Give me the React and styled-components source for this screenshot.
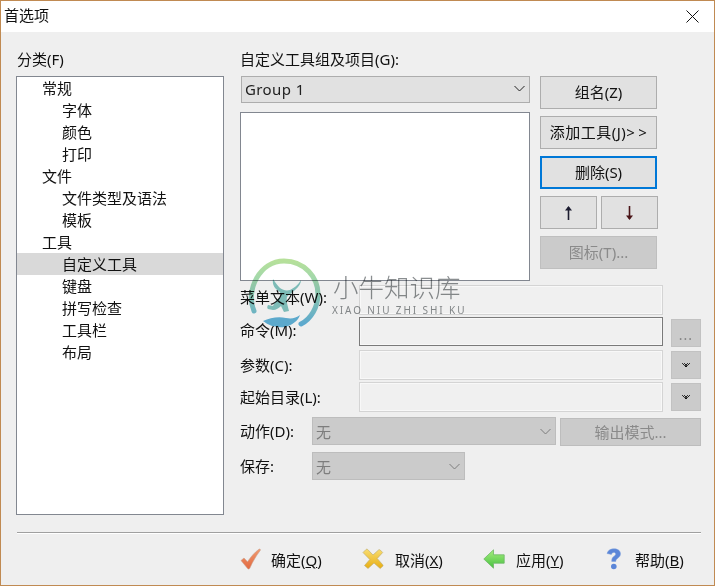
import React from 'react'
import styled, { createGlobalStyle } from 'styled-components'

const Global = createGlobalStyle`
  html, body { margin: 0; padding: 0; background: #fff; }
  body { font-family: "Noto Sans", "Noto Sans CJK SC", sans-serif; font-size: 15px; color: #111; }
`

const tree = [
  { text: '常规', level: 0 },
  { text: '字体', level: 1 },
  { text: '颜色', level: 1 },
  { text: '打印', level: 1 },
  { text: '文件', level: 0 },
  { text: '文件类型及语法', level: 1 },
  { text: '模板', level: 1 },
  { text: '工具', level: 0 },
  { text: '自定义工具', level: 1, selected: true },
  { text: '键盘', level: 1 },
  { text: '拼写检查', level: 1 },
  { text: '工具栏', level: 1 },
  { text: '布局', level: 1 },
]

function Chevron() {
  return (
    <svg width="11" height="7" viewBox="0 0 11 7">
      <path d="M.5 1 5.500 6l5-5" fill="none" stroke="currentColor" strokeWidth="1" />
    </svg>
  )
}

function Caret() {
  return (
    <svg width="8" height="5" viewBox="0 0 8 5" shapeRendering="crispEdges">
      <path d="M0 0h1v1H0zM2 0h1v1H2zM5 0h1v1H5zM7 0h1v1H7z" fill="#333" />
      <path d="M1 1h1v1H1zM3 1h2v1H3zM6 1h1v1H6z" fill="#222" />
      <path d="M2 2h4v1H2z" fill="#444" />
      <path d="M3 3h2v1H3z" fill="#111" />
    </svg>
  )
}

function ArrowGlyph({ down, color }) {
  return (
    <svg width="9" height="14" viewBox="0 0 9 14" style={{ transform: down ? 'rotate(180deg)' : 'none' }}>
      <path d="M4.500 1v13" stroke={color} strokeWidth="1.600" />
      <path d="M4.500 0 8 4.500H1z" fill={color} />
    </svg>
  )
}

function CheckIcon() {
  return (
    <svg width="22" height="22" viewBox="0 0 22 22">
      <defs>
        <linearGradient id="chk" x1="0" y1="0" x2="0" y2="1">
          <stop offset="0" stopColor="#f09a70" />
          <stop offset="1" stopColor="#e2683f" />
        </linearGradient>
      </defs>
      <path d="M1 12.500 4 10l3.500 3.800C10.500 9 14.500 4.500 19 1.200c1-.5 1.800.4 1.200 1.300C16 8 12.500 14 9.800 20.200c-.5 1-1.500 1.100-2.200.3z" fill="url(#chk)" stroke="#c9a08c" strokeWidth=".6" />
    </svg>
  )
}

function CrossIcon() {
  return (
    <svg width="22" height="22" viewBox="0 0 22 22">
      <defs>
        <linearGradient id="crs" x1="0" y1="0" x2="0" y2="1">
          <stop offset="0" stopColor="#f8dc70" />
          <stop offset="1" stopColor="#e8ae12" />
        </linearGradient>
      </defs>
      <path d="M1 4.500 4 1.500c.6-.5 1.300-.4 1.800.1L11 7l5.500-5c.5-.4 1.200-.4 1.700 0l2.500 2.500-5.500 6 5.500 6.200c.5.500.4 1.200 0 1.600l-2.500 2.200-6.200-5.500-6 5.500-3.500-3 5.300-6z" fill="url(#crs)" stroke="#b9a76a" strokeWidth=".6" />
    </svg>
  )
}

function BackIcon() {
  return (
    <svg width="22" height="20" viewBox="0 0 22 20">
      <defs>
        <linearGradient id="bck" x1="0" y1="0" x2="0" y2="1">
          <stop offset="0" stopColor="#a6ee7e" />
          <stop offset="1" stopColor="#46c040" />
        </linearGradient>
      </defs>
      <path d="M.8 10 10.500.8v5h10.700v8.400H10.500v5z" fill="url(#bck)" stroke="#6fb866" strokeWidth=".8" strokeLinejoin="round" />
    </svg>
  )
}

function HelpIcon() {
  return (
    <svg width="16" height="22" viewBox="0 0 16 22">
      <path d="M1 5.500C2 2 5 .8 8 .8c3.600 0 6.500 1.900 6.500 5 0 2.400-1.500 3.500-3 4.600-1.200.9-1.700 1.500-1.700 3H5.700c0-2.600.6-3.700 2-4.800 1.100-.9 2-1.500 2-2.600 0-1-.8-1.600-1.900-1.600-1.200 0-2 .7-2.400 2z" fill="#5b86d8" stroke="#7fa0dc" strokeWidth=".5" />
      <circle cx="7.800" cy="18.500" r="2.800" fill="#5b86d8" />
    </svg>
  )
}

function Watermark() {
  return (
    <MarkLayer>
      <svg width="76" height="76" viewBox="0 0 76 76">
        <defs>
          <linearGradient id="ring" x1="0" y1="0" x2="0" y2="1">
            <stop offset="0" stopColor="#b6e09a" />
            <stop offset=".55" stopColor="#8fd0bc" />
            <stop offset="1" stopColor="#62b4dc" />
          </linearGradient>
        </defs>
        <path d="M8 54C-1 33 14 4 38 4c21 0 34 17 34 33 0 13-7 25-17 30" fill="none" stroke="url(#ring)" strokeWidth="5" strokeLinecap="round" />
        <path d="M27 22c-1 6 2 10 7 13l1 5c-4 2-7 6-8 9l-5-1c-1 2-1 3 0 4l5 1c3 0 6-2 8-4l3 6 5-1c-1-5-3-9-2-14 1-2 5-4 8-7 4-3 6-7 6-10-3 5-7 8-11 10-4 1-7 0-10-2-3-3-5-6-7-9z" fill="#85c8c4" />
        <path d="M17 64c7-3 15-5 23-3 6 1 10 0 14-3-2 6-8 10-15 12-8 1-16-1-22-6z" fill="#62b4da" />
      </svg>
      <MarkText>
        <MarkTitle>小牛知识库</MarkTitle>
        <MarkSub>XIAO NIU ZHI SHI KU</MarkSub>
      </MarkText>
    </MarkLayer>
  )
}

export default function App() {
  return (
    <Dialog>
      <Global />
      <TitleBar>
        <span>首选项</span>
        <CloseBtn>
          <svg width="13" height="13" viewBox="0 0 13 13">
            <path d="M.5.500l12 12M12.500.500l-12 12" stroke="#111" strokeWidth="1" />
          </svg>
        </CloseBtn>
      </TitleBar>
      <Body>
        <Columns>
          <LeftCol>
            <Caption $indent={1}>分类(F)</Caption>
            <TreeBox>
              {tree.map((item) => (
                <TreeRow key={item.text} $level={item.level} $selected={item.selected}>
                  {item.text}
                </TreeRow>
              ))}
            </TreeBox>
          </LeftCol>
          <RightCol>
            <Caption>自定义工具组及项目(G):</Caption>
            <ToolArea>
              <ToolList>
                <GroupSelect>
                  <span>Group 1</span>
                  <Chevron />
                </GroupSelect>
                <ListBox />
              </ToolList>
              <ButtonCol>
                <PushBtn>组名(Z)</PushBtn>
                <PushBtn $spread={0.5}>添加工具(J)&gt;&thinsp;&gt;</PushBtn>
                <PushBtn $focused>删除(S)</PushBtn>
                <ArrowRow>
                  <ArrowBtn><ArrowGlyph color="#1c1c30" /></ArrowBtn>
                  <ArrowBtn><ArrowGlyph down color="#4a1418" /></ArrowBtn>
                </ArrowRow>
                <PushBtn $disabled>图标(T)...</PushBtn>
              </ButtonCol>
            </ToolArea>
            <FieldGrid>
              <FieldLabel $lift={7}>菜单文本(W):</FieldLabel>
              <TextField />
              <span />
              <FieldLabel $lift={5}>命令(M):</FieldLabel>
              <TextField $active />
              <SmallBtn $dots>...</SmallBtn>
              <FieldLabel>参数(C):</FieldLabel>
              <TextField />
              <SmallBtn><Caret /></SmallBtn>
              <FieldLabel>起始目录(L):</FieldLabel>
              <TextField />
              <SmallBtn><Caret /></SmallBtn>
            </FieldGrid>
            <ActionRow>
              <FieldLabel $width={72}>动作(D):</FieldLabel>
              <GreySelect $width={244}>
                <span>无</span>
                <Chevron />
              </GreySelect>
              <ExportBtn>输出模式...</ExportBtn>
            </ActionRow>
            <SaveRow>
              <FieldLabel $width={72}>保存:</FieldLabel>
              <GreySelect $width={153}>
                <span>无</span>
                <Chevron />
              </GreySelect>
            </SaveRow>
          </RightCol>
        </Columns>
        <Divider />
        <Footer>
          <FootBtn $width={122} $gap={9}><CheckIcon /><span>确定(<u>Q</u>)</span></FootBtn>
          <FootBtn $width={121} $gap={11}><CrossIcon /><span>取消(<u>X</u>)</span></FootBtn>
          <FootBtn $width={123} $gap={11}><BackIcon /><span>应用(<u>Y</u>)</span></FootBtn>
          <FootBtn $width={90} $gap={13}><HelpIcon /><span>帮助(<u>B</u>)</span></FootBtn>
        </Footer>
      </Body>
      <Watermark />
    </Dialog>
  )
}

const Dialog = styled.div`
  position: relative;
  box-sizing: border-box;
  width: 715px;
  height: 586px;
  display: flex;
  flex-direction: column;
  overflow: hidden;
  background: #efefef;
  border: 1px solid #c08a52;
`

const TitleBar = styled.div`
  height: 31px;
  box-sizing: border-box;
  flex: none;
  background: #fff;
  display: flex;
  align-items: center;
  justify-content: space-between;
  padding: 0 15px 0 3px;
  line-height: 26px;
  span { margin-bottom: 4px; }
`

const CloseBtn = styled.div`
  display: flex;
`

const Body = styled.div`
  flex: 1;
  display: flex;
  flex-direction: column;
  padding: 18px 13px 0 15px;
`

const Columns = styled.div`
  display: flex;
  gap: 16px;
  height: 465px;
`

const LeftCol = styled.div`
  width: 208px;
  flex: none;
  display: flex;
  flex-direction: column;
`

const Caption = styled.div`
  height: 26px;
  flex: none;
  line-height: 18px;
  padding-left: ${(p) => p.$indent || 0}px;
`

const TreeBox = styled.div`
  height: 439px;
  box-sizing: border-box;
  background: #fff;
  border: 1px solid #828790;
`

const TreeRow = styled.div`
  height: 22px;
  line-height: 22px;
  padding-left: ${(p) => (p.$level ? 45 : 25)}px;
  background: ${(p) => (p.$selected ? '#d9d9d9' : 'transparent')};
`

const RightCol = styled.div`
  flex: 1;
  display: flex;
  flex-direction: column;
  min-width: 0;
`

const ToolArea = styled.div`
  display: flex;
  gap: 10px;
  height: 209px;
  flex: none;
`

const ToolList = styled.div`
  width: 290px;
  display: flex;
  flex-direction: column;
  gap: 9px;
`

const GroupSelect = styled.div`
  height: 27px;
  box-sizing: border-box;
  margin-left: 1px;
  width: 289px;
  display: flex;
  align-items: center;
  justify-content: space-between;
  padding: 0 4px 2px 3px;
  background: #e1e1e1;
  border: 1px solid #adadad;
  letter-spacing: 0.4px;
  color: #222;
`

const ListBox = styled.div`
  height: 169px;
  box-sizing: border-box;
  background: #fff;
  border: 1px solid #828790;
`

const ButtonCol = styled.div`
  width: 118px;
  display: flex;
  flex-direction: column;
  gap: 7px;
`

const PushBtn = styled.div`
  width: 117px;
  height: 33px;
  box-sizing: border-box;
  display: flex;
  align-items: center;
  justify-content: center;
  padding-bottom: 2px;
  white-space: nowrap;
  letter-spacing: ${(p) => p.$spread || 0}px;
  background: ${(p) => (p.$disabled ? '#cbcbcb' : '#e1e1e1')};
  border: ${(p) => (p.$focused ? '2px solid #0078d7' : p.$disabled ? '1px solid #bfbfbf' : '1px solid #adadad')};
  color: ${(p) => (p.$disabled ? '#8a8a8a' : '#111')};
`

const ArrowRow = styled.div`
  display: flex;
  gap: 4px;
`

const ArrowBtn = styled.div`
  width: 57px;
  height: 33px;
  box-sizing: border-box;
  display: flex;
  align-items: center;
  justify-content: center;
  background: #e1e1e1;
  border: 1px solid #adadad;
`

const FieldGrid = styled.div`
  display: grid;
  grid-template-columns: 119px 304px 38px;
  grid-template-rows: 30px 31px 30px 30px;
  row-gap: 2px;
  align-items: center;
`

const FieldLabel = styled.div`
  width: ${(p) => (p.$width ? `${p.$width}px` : 'auto')};
  flex: none;
  line-height: 20px;
  white-space: nowrap;
  padding-bottom: ${(p) => p.$lift || 0}px;
`

const TextField = styled.div`
  height: ${(p) => (p.$active ? 29 : 30)}px;
  align-self: start;
  box-sizing: border-box;
  border: 1px solid ${(p) => (p.$active ? '#7a7a7a' : '#d4d4d4')};
  box-shadow: inset 0 0 0 1px #f8f8f8;
  background: #f0f0f0;
`

const SmallBtn = styled.div`
  width: 30px;
  height: 28px;
  margin-left: 8px;
  box-sizing: border-box;
  display: flex;
  align-items: center;
  justify-content: center;
  background: #cbcbcb;
  border: 1px solid #c2c2c2;
  color: #858585;
  font-size: 14px;
  letter-spacing: 1px;
  padding-top: ${(p) => (p.$dots ? '3px' : '0')};
`

const ActionRow = styled.div`
  display: flex;
  align-items: center;
  margin-top: 5px;
  height: 28px;
`

const SaveRow = styled.div`
  display: flex;
  align-items: center;
  margin-top: 7px;
  height: 28px;
`

const GreySelect = styled.div`
  width: ${(p) => p.$width}px;
  height: 28px;
  flex: none;
  box-sizing: border-box;
  display: flex;
  align-items: center;
  justify-content: space-between;
  padding: 0 4px 0 3px;
  background: #cbcbcb;
  border: 1px solid #bdbdbd;
  color: #7d7d7d;
`

const ExportBtn = styled.div`
  width: 142px;
  height: 28px;
  margin-left: 4px;
  margin-top: 1px;
  box-sizing: border-box;
  display: flex;
  align-items: center;
  justify-content: center;
  background: #cbcbcb;
  border: 1px solid #bdbdbd;
  color: #8a8a8a;
`

const Divider = styled.div`
  height: 1px;
  margin: 17px 0 0 1px;
  flex: none;
  background: #a0a0a0;
  box-shadow: 0 1px 0 #fff;
`

const Footer = styled.div`
  display: flex;
  margin-top: 14px;
  padding-left: 224px;
`

const FootBtn = styled.div`
  width: ${(p) => p.$width}px;
  display: flex;
  align-items: center;
  gap: ${(p) => p.$gap}px;
  height: 24px;
`

const MarkLayer = styled.div`
  position: absolute;
  left: 245px;
  top: 256px;
  display: flex;
  gap: 11px;
  mix-blend-mode: multiply;
  pointer-events: none;
`

const MarkText = styled.div`
  padding-top: 13px;
  color: #8a8e90;
`

const MarkTitle = styled.div`
  font-size: 25.5px;
  line-height: 32px;
  font-weight: 300;
  font-family: "Noto Sans CJK SC", sans-serif;
`

const MarkSub = styled.div`
  font-size: 10px;
  line-height: 12px;
  letter-spacing: 1.9px;
  margin-left: -1px;
  margin-top: 2px;
  white-space: nowrap;
`
